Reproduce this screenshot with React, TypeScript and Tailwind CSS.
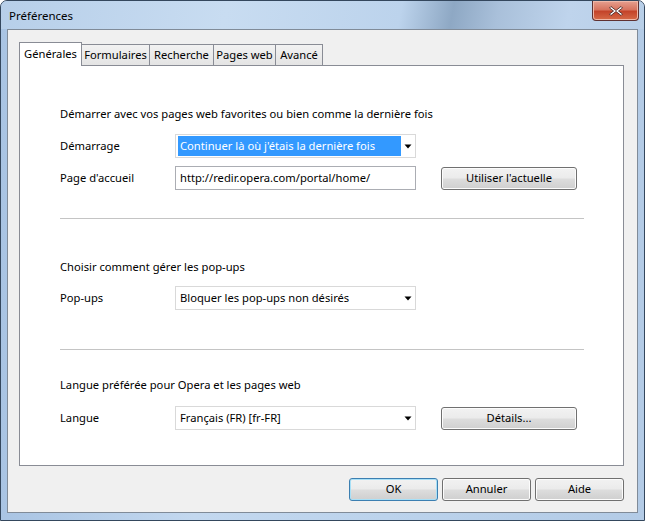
import type { ReactNode } from "react";

const font = { fontFamily: '"Noto Sans", "Segoe UI", sans-serif' };

function Combo({ value, selected }: { value: string; selected?: boolean }) {
  return (
    <div className="flex h-[24px] w-[241px] items-center border border-[#d9d9d9] bg-white pl-[2px] pr-[1px]">
      <div
        className={
          selected
            ? "flex h-[20px] flex-1 items-center bg-[#3399ff] pl-[2px] text-white"
            : "flex h-[20px] flex-1 items-center pl-[2px] text-black"
        }
      >
        {value}
      </div>
      <svg width="12" height="20" viewBox="0 0 12 20" className="ml-[1px]">
        <path d="M2.5 8.5h7L6 12.5z" fill="#000" />
      </svg>
    </div>
  );
}

function Input({ value }: { value: string }) {
  return (
    <div className="flex h-[24px] w-[241px] items-center border border-[#abadb3] bg-white px-[4px] text-black">
      {value}
    </div>
  );
}

function Button({ children, w, primary }: { children: ReactNode; w: string; primary?: boolean }) {
  return (
    <div
      className={`${w} flex h-[23px] items-center justify-center rounded-[3px] border ${
        primary ? "border-[#3c7fb1] shadow-[inset_0_0_0_1px_#a8e0f7]" : "border-[#707070] shadow-[inset_0_0_0_1px_#fcfcfc]"
      } bg-[linear-gradient(#f2f2f2_0%,#ebebeb_48%,#dddddd_52%,#cfcfcf_100%)] text-black`}
    >
      {children}
    </div>
  );
}

function Row({ label, children }: { label: string; children: ReactNode }) {
  return (
    <div className="flex items-center">
      <div className="w-[115px]">{label}</div>
      {children}
    </div>
  );
}

function Tab({ label, active, w }: { label: string; active?: boolean; w: string }) {
  return active ? (
    <div className={`${w} relative z-10 -mb-px flex h-[24px] items-center justify-center border border-b-0 border-[#898c95] bg-white`}>
      {label}
    </div>
  ) : (
    <div className={`${w} -ml-px flex h-[21px] items-center justify-center border border-b-0 border-[#898c95] bg-[linear-gradient(#f2f2f2,#e4e4e4)] first:ml-0`}>
      {label}
    </div>
  );
}

export default function App() {
  return (
    <div
      style={font}
      className="flex h-[521px] w-[645px] flex-col overflow-hidden rounded-t-[7px] border border-[#34475d] bg-[linear-gradient(90deg,#a9c4e3,#c3d8ef_30%,#bcd3ec_60%,#b3cbe6)] text-[11.2px] text-black"
    >
      <div className="flex h-[28px] shrink-0 items-start justify-between bg-[linear-gradient(100deg,#b7cfe9_0%,#c8dcf1_35%,#bcd3ec_62%,#8ea8c4_70%,#a9c0da_77%,#bfd4ec_88%,#b8cfe8_100%)]">
        <div className="pl-[8px] pt-[6px] text-[11.5px]">Préférences</div>
        <div className="mr-[5px] flex h-[20px] w-[47px] items-center justify-center rounded-b-[4px] border border-t-0 border-[#5f3131] bg-[linear-gradient(#e6a090_0%,#d7745f_45%,#c4442a_55%,#d66a47_100%)] shadow-[inset_0_0_0_1px_#efb8a8]">
          <svg width="14" height="12" viewBox="0 0 14 12">
            <path d="M2 1.5l5 4 5-4 1.5 1.5-4 3 4 3-1.5 1.5-5-4-5 4L.5 9l4-3-4-3z" fill="#fff" stroke="#3a1f1f" strokeWidth="0.8" />
          </svg>
        </div>
      </div>
      <div className="mx-[6px] mb-[7px] flex flex-1 flex-col border border-[#808b98] bg-[#f0f0f0] pl-[11px] pr-[13px] pt-[12px]">
        <div className="flex items-end">
          <Tab label="Générales" active w="w-[63px]" />
          <Tab label="Formulaires" w="w-[69px]" />
          <Tab label="Recherche" w="w-[65px]" />
          <Tab label="Pages web" w="w-[63px]" />
          <Tab label="Avancé" w="w-[48px]" />
        </div>
        <div className="flex h-[401px] flex-col border border-[#898c95] bg-white pl-[40px] pr-[39px]">
          <div className="mt-[40px] leading-[16px]">Démarrer avec vos pages web favorites ou bien comme la dernière fois</div>
          <div className="mt-[12px] flex flex-col gap-[8px]">
            <Row label="Démarrage">
              <Combo value="Continuer là où j'étais la dernière fois" selected />
            </Row>
            <Row label="Page d'accueil">
              <Input value="http://redir.opera.com/portal/home/" />
              <div className="ml-[25px]">
                <Button w="w-[136px]">Utiliser l'actuelle</Button>
              </div>
            </Row>
          </div>
          <div className="mt-[28px] h-px bg-[#c4c4c4]" />
          <div className="mt-[40px] leading-[16px]">Choisir comment gérer les pop-ups</div>
          <div className="mt-[11px]">
            <Row label="Pop-ups">
              <Combo value="Bloquer les pop-ups non désirés" />
            </Row>
          </div>
          <div className="mt-[39px] h-px bg-[#c4c4c4]" />
          <div className="mt-[27px] leading-[16px]">Langue préférée pour Opera et les pages web</div>
          <div className="mt-[13px]">
            <Row label="Langue">
              <Combo value="Français (FR) [fr-FR]" />
              <div className="ml-[25px]">
                <Button w="w-[136px]">Détails...</Button>
              </div>
            </Row>
          </div>
        </div>
        <div className="mt-[12px] flex justify-end gap-[4px]">
          <Button w="w-[89px]" primary>OK</Button>
          <Button w="w-[89px]">Annuler</Button>
          <Button w="w-[89px]">Aide</Button>
        </div>
      </div>
    </div>
  );
}
